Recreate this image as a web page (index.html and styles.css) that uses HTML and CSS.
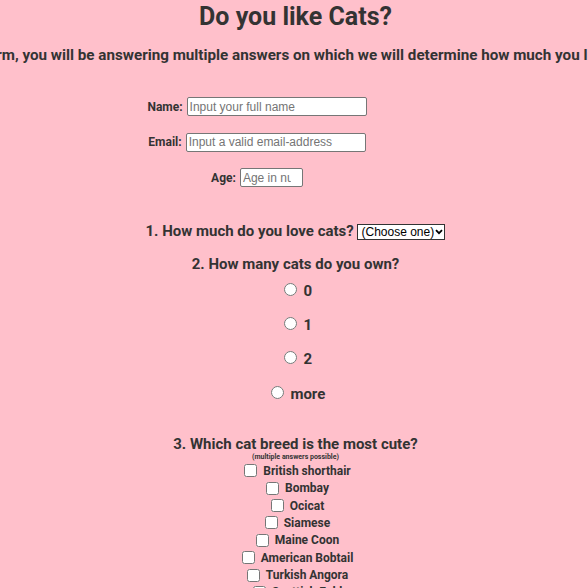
FILE: index.html
```html
<!DOCTYPE html>
<html lang="en">
<head>
<meta charset="utf-8">
<title>Do you like Cats?</title>
<link rel="stylesheet" href="styles.css">
</head>
<body>
<h1 class="title">Do you like Cats?</h1>
<div class="intro-wrap">
  <p class="intro">In this form, you will be answering multiple answers on which we will determine how much you like cats.</p>
</div>
<form class="survey">
  <div class="fields">
    <div class="field"><label for="name">Name:</label><input id="name" type="text" placeholder="Input your full name"></div>
    <div class="field"><label for="email">Email:</label><input id="email" type="email" placeholder="Input a valid email-address"></div>
    <div class="field"><label for="age">Age:</label><input id="age" class="age" type="number" placeholder="Age in numbers"></div>
  </div>

  <div class="question q1">1. How much do you love cats? <select class="choose"><option>(Choose one)</option><option>A little</option><option>A lot</option></select></div>

  <div class="question q2">2. How many cats do you own?</div>
  <div class="radios">
    <div class="radio-row"><input type="radio" name="count" id="c0"> <label for="c0">0</label></div>
    <div class="radio-row"><input type="radio" name="count" id="c1"> <label for="c1">1</label></div>
    <div class="radio-row"><input type="radio" name="count" id="c2"> <label for="c2">2</label></div>
    <div class="radio-row"><input type="radio" name="count" id="c3"> <label for="c3">more</label></div>
  </div>

  <div class="question q3">3. Which cat breed is the most cute?</div>
  <div class="note">(multiple answers possible)</div>
  <div class="checks">
    <div class="check-row"><input type="checkbox" id="b1"><label for="b1">British shorthair</label></div>
    <div class="check-row"><input type="checkbox" id="b2"><label for="b2">Bombay</label></div>
    <div class="check-row"><input type="checkbox" id="b3"><label for="b3">Ocicat</label></div>
    <div class="check-row"><input type="checkbox" id="b4"><label for="b4">Siamese</label></div>
    <div class="check-row"><input type="checkbox" id="b5"><label for="b5">Maine Coon</label></div>
    <div class="check-row"><input type="checkbox" id="b6"><label for="b6">American Bobtail</label></div>
    <div class="check-row"><input type="checkbox" id="b7"><label for="b7">Turkish Angora</label></div>
    <div class="check-row"><input type="checkbox" id="b8"><label for="b8">Scottish Fold</label></div>
  </div>
</form>
</body>
</html>
```
FILE: styles.css
```css
html {
  scrollbar-width: none;
}

body {
  margin: 0;
  padding: 0 0 40px 3px;
  background: #ffc0cb;
  color: #333333;
  font-family: Roboto, "Noto Sans", sans-serif;
  overflow-x: hidden;
}

.title {
  margin: 2px 0 0;
  font-size: 25px;
  line-height: 29px;
  font-weight: 700;
  text-align: center;
}

.intro-wrap {
  display: flex;
  justify-content: center;
  margin-top: 15px;
  padding-right: 10px;
}

.intro {
  flex: none;
  margin: 0;
  white-space: nowrap;
  font-size: 15.2px;
  line-height: 19px;
  font-weight: 700;
}

.fields {
  margin-top: 32px;
  padding-right: 77px;
  display: flex;
  flex-direction: column;
  gap: 16.5px;
}

.field {
  display: flex;
  justify-content: center;
  align-items: center;
  gap: 4px;
  height: 19px;
}

.field label {
  font-size: 12px;
  font-weight: 700;
}

.field input {
  box-sizing: border-box;
  width: 180px;
  height: 19px;
  margin: 0;
  padding: 1px 2px;
  font: 12px "Liberation Sans", Arial, sans-serif;
  color: #222;
  background: #fff;
  border: 1px solid #767676;
  border-radius: 2px;
}

.field input::placeholder {
  color: #757575;
}

.field input.age {
  width: 63px;
  padding-right: 11px;
}

.field input.age::-webkit-inner-spin-button,
.field input.age::-webkit-outer-spin-button {
  -webkit-appearance: none;
  margin: 0;
}

.question {
  text-align: center;
  font-size: 15px;
  line-height: 18px;
  font-weight: 700;
}

.q1 {
  margin-top: 35px;
}

.choose {
  -webkit-appearance: none;
  appearance: none;
  box-sizing: border-box;
  width: 88px;
  height: 16px;
  margin: 0;
  padding: 0 10px 0 3px;
  font: 12px "Liberation Sans", Arial, sans-serif;
  color: #000;
  background: #fff url("data:image/svg+xml;utf8,<svg xmlns='http://www.w3.org/2000/svg' width='8' height='6' viewBox='0 0 8 6'><path d='M1 1.2 L4 4.2 L7 1.2' fill='none' stroke='black' stroke-width='1.8'/></svg>") no-repeat right 1px center;
  border: 1px solid #333;
  border-radius: 0;
}

.q2 {
  margin-top: 15px;
}

.radios {
  margin-top: 7px;
  display: flex;
  flex-direction: column;
  gap: 16.2px;
}

.radio-row {
  height: 18px;
  text-align: center;
  font-size: 15px;
  line-height: 18px;
  font-weight: 700;
}

.q3 {
  margin-top: 34px;
}

.note {
  text-align: center;
  font-size: 7px;
  line-height: 8px;
  font-weight: 700;
}

.checks {
  margin-top: 1.5px;
  display: flex;
  flex-direction: column;
}

.check-row {
  display: flex;
  justify-content: center;
  align-items: center;
  height: 17.4px;
  font-size: 12px;
  font-weight: 700;
}

.check-row input {
  margin: 0 6px 0 4px;
  width: 13px;
  height: 13px;
}
```
